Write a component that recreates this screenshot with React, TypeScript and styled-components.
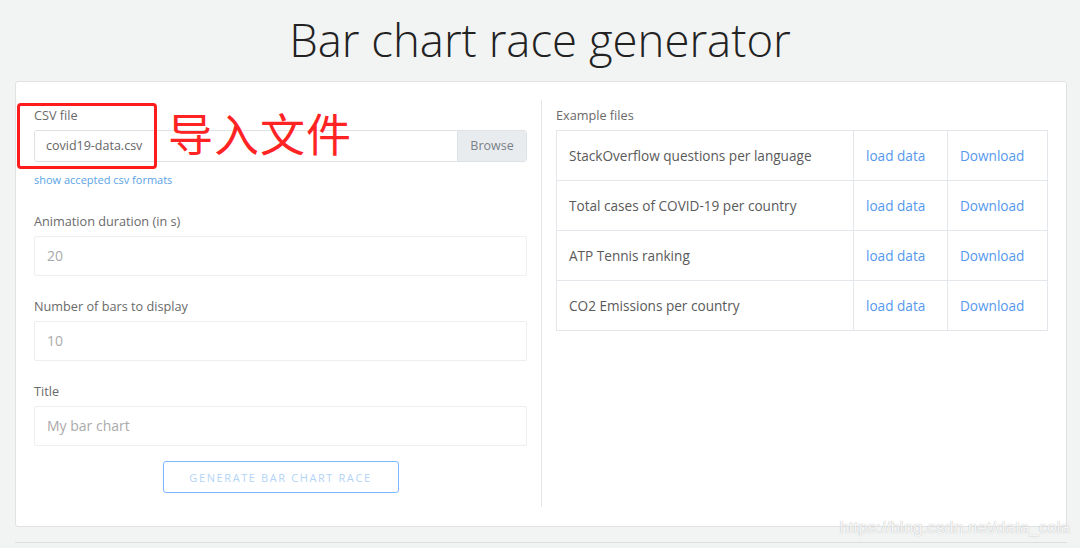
import React from 'react'
import styled, { createGlobalStyle } from 'styled-components'

const GlobalStyle = createGlobalStyle`
  body {
    margin: 0;
    background: #f2f3f3;
    font-family: 'Open Sans', 'Noto Sans', sans-serif;
    color: #555;
  }
`

const StyledPage = styled.div`
  width: 1080px;
  height: 548px;
  position: relative;
  overflow: hidden;
`

const StyledTitle = styled.h1`
  margin: 0;
  padding-top: 10px;
  height: 81px;
  box-sizing: border-box;
  text-align: center;
  font-size: 45.5px;
  line-height: 58px;
  font-weight: 300;
  color: #222;
`

const StyledCard = styled.div`
  margin: 0 13px 0 15px;
  background: #fff;
  border: 1px solid #e1e3e3;
  border-radius: 3px;
  padding: 18px 18px 19px;
  display: grid;
  grid-template-columns: 508px 1fr;
  height: 446px;
  box-sizing: border-box;
`

const StyledLeftColumn = styled.div`
  border-right: 1px solid #e4e6e8;
  padding: 6px 14px 0 0;
  display: flex;
  flex-direction: column;
`

const StyledRightColumn = styled.div`
  padding: 6px 0 0 14px;
`

const StyledGroup = styled.div<{ $spacing?: number }>`
  position: relative;
  margin-bottom: ${(p) => p.$spacing ?? 21}px;
`

const StyledLabel = styled.div`
  font-size: 12.7px;
  line-height: 18px;
  color: #6a6a6a;
  margin-bottom: 6px;
`

const StyledFileInput = styled.div`
  display: flex;
  height: 32px;
  border: 1px solid #dfe2e5;
  border-radius: 3px;
  box-sizing: border-box;
  overflow: hidden;
`

const StyledFileName = styled.div`
  flex: 1;
  padding-left: 11px;
  font-size: 12.5px;
  line-height: 30px;
  color: #666;
`

const StyledBrowse = styled.div`
  width: 68px;
  background: #e9ecef;
  border-left: 1px solid #dfe2e5;
  text-align: center;
  font-size: 12.5px;
  line-height: 30px;
  color: #7a8188;
`

const StyledHelpLink = styled.a`
  display: block;
  margin-top: 10px;
  font-size: 11px;
  line-height: 16px;
  color: #5aa3e6;
  text-decoration: none;
`

const StyledInput = styled.div`
  height: 40px;
  border: 1px solid #eceef1;
  border-radius: 2px;
  box-sizing: border-box;
  padding-left: 12px;
  font-size: 14px;
  line-height: 38px;
  color: #aaa;
`

const StyledButton = styled.button`
  align-self: center;
  margin-top: -6px;
  width: 236px;
  height: 32px;
  background: #fff;
  border: 1px solid #7ab8ff;
  border-radius: 3px;
  font-family: inherit;
  font-size: 11px;
  letter-spacing: 1.6px;
  color: #b3d4f8;
`

const StyledAnnotationBox = styled.div`
  position: absolute;
  left: -17px;
  top: -3px;
  width: 140px;
  height: 66px;
  border: 3px solid #ff1c1c;
  border-radius: 4px;
  box-sizing: border-box;
`

const StyledAnnotationText = styled.div`
  position: absolute;
  left: 134px;
  top: 1px;
  font-family: 'Noto Sans CJK SC', sans-serif;
  font-size: 45px;
  line-height: 52px;
  color: #ff2323;
  letter-spacing: 1px;
`

const StyledTable = styled.table`
  width: 100%;
  border-collapse: collapse;
`

const StyledCell = styled.td<{ $width?: number }>`
  border: 1px solid #e3e6ea;
  height: 50px;
  padding: 0 12px;
  font-size: 13.6px;
  color: #5a5a5a;
  width: ${(p) => (p.$width ? `${p.$width}px` : 'auto')};
  box-sizing: border-box;
`

const StyledCellLink = styled.a`
  color: #5598ee;
  text-decoration: none;
`

const StyledFooterLine = styled.div`
  margin: 15px 13px 0 15px;
  border-top: 1px solid #dcdede;
`

const StyledWatermark = styled.div`
  position: absolute;
  right: 10px;
  top: 518px;
  font-family: 'Liberation Sans', Arial, sans-serif;
  font-size: 17px;
  color: rgba(255, 255, 255, 0.9);
  text-shadow: 0 0 1px rgba(120, 120, 120, 0.6);
`

const examples = [
  'StackOverflow questions per language',
  'Total cases of COVID-19 per country',
  'ATP Tennis ranking',
  'CO2 Emissions per country',
]

const fields = [
  { label: 'Animation duration (in s)', placeholder: '20' },
  { label: 'Number of bars to display', placeholder: '10' },
  { label: 'Title', placeholder: 'My bar chart' },
]

const App = () => (
  <StyledPage>
    <GlobalStyle />
    <StyledTitle>Bar chart race generator</StyledTitle>
    <StyledCard>
      <StyledLeftColumn>
        <StyledGroup $spacing={24}>
          <StyledLabel>CSV file</StyledLabel>
          <StyledFileInput>
            <StyledFileName>covid19-data.csv</StyledFileName>
            <StyledBrowse>Browse</StyledBrowse>
          </StyledFileInput>
          <StyledHelpLink href="#">show accepted csv formats</StyledHelpLink>
          <StyledAnnotationBox />
          <StyledAnnotationText>导入文件</StyledAnnotationText>
        </StyledGroup>
        {fields.map((f) => (
          <StyledGroup key={f.label}>
            <StyledLabel>{f.label}</StyledLabel>
            <StyledInput>{f.placeholder}</StyledInput>
          </StyledGroup>
        ))}
        <StyledButton>GENERATE BAR CHART RACE</StyledButton>
      </StyledLeftColumn>
      <StyledRightColumn>
        <StyledLabel>Example files</StyledLabel>
        <StyledTable>
          <tbody>
            {examples.map((name) => (
              <tr key={name}>
                <StyledCell $width={297}>{name}</StyledCell>
                <StyledCell $width={94}>
                  <StyledCellLink href="#">load data</StyledCellLink>
                </StyledCell>
                <StyledCell>
                  <StyledCellLink href="#">Download</StyledCellLink>
                </StyledCell>
              </tr>
            ))}
          </tbody>
        </StyledTable>
      </StyledRightColumn>
    </StyledCard>
    <StyledFooterLine />
    <StyledWatermark>https://blog.csdn.net/data_cola</StyledWatermark>
  </StyledPage>
)

export default App
